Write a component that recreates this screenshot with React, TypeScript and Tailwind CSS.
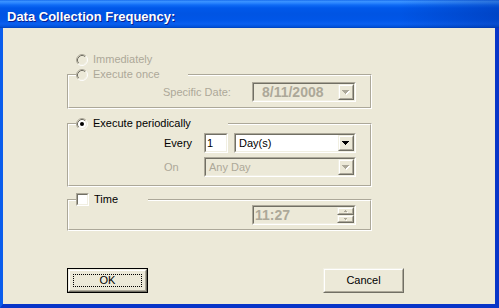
import React from 'react';

type P = { className?: string; inner?: string; children?: React.ReactNode };

const Sunken = ({ className = '', inner = '', children }: P) => (
  <div className={`border border-t-[#ACA899] border-l-[#ACA899] border-r-white border-b-white ${className}`}>
    <div className={`w-full h-full border border-t-[#716F64] border-l-[#716F64] border-r-[#F1EFE2] border-b-[#F1EFE2] flex items-stretch ${inner}`}>
      {children}
    </div>
  </div>
);

const Raised = ({ className = '', inner = '', children }: P) => (
  <div className={`border border-t-[#F1EFE2] border-l-[#F1EFE2] border-r-[#716F64] border-b-[#716F64] bg-[#ECE9D8] ${className}`}>
    <div className={`w-full h-full border border-t-white border-l-white border-r-[#ACA899] border-b-[#ACA899] flex items-center justify-center ${inner}`}>
      {children}
    </div>
  </div>
);

const Arrow = ({ disabled = false }: { disabled?: boolean }) => (
  <svg width="8" height="5" viewBox="0 0 8 5" shapeRendering="crispEdges" className="block">
    {disabled && (
      <g fill="#fff">
        <rect x="1" y="1" width="7" height="1" />
        <rect x="2" y="2" width="5" height="1" />
        <rect x="3" y="3" width="3" height="1" />
        <rect x="4" y="4" width="1" height="1" />
      </g>
    )}
    <g fill={disabled ? '#ACA899' : '#000'}>
      <rect x="0" y="0" width="7" height="1" />
      <rect x="1" y="1" width="5" height="1" />
      <rect x="2" y="2" width="3" height="1" />
      <rect x="3" y="3" width="1" height="1" />
    </g>
  </svg>
);

const TinyArrow = ({ up = false }: { up?: boolean }) => (
  <svg width="4" height="3" viewBox="0 0 4 3" shapeRendering="crispEdges" className="block">
    <g fill="#ACA899">
      {up ? (
        <>
          <rect x="1" y="0" width="1" height="1" />
          <rect x="0" y="1" width="3" height="1" />
        </>
      ) : (
        <>
          <rect x="0" y="0" width="3" height="1" />
          <rect x="1" y="1" width="1" height="1" />
        </>
      )}
    </g>
    <rect x={up ? 3 : 2} y={up ? 2 : 2} width="1" height="1" fill="#fff" />
  </svg>
);

const Radio = ({ checked = false, disabled = false }: { checked?: boolean; disabled?: boolean }) => (
  <svg width="12" height="12" viewBox="0 0 12 12" className="block shrink-0">
    <circle cx="6" cy="6" r="4" fill={disabled ? '#ECE9D8' : '#fff'} />
    <path d="M2.11 9.89A5.5 5.5 0 0 1 9.89 2.11" fill="none" stroke="#ACA899" />
    <path d="M9.89 2.11A5.5 5.5 0 0 1 2.11 9.89" fill="none" stroke="#fff" />
    <path d="M2.82 9.18A4.5 4.5 0 0 1 9.18 2.82" fill="none" stroke="#716F64" />
    <path d="M9.18 2.82A4.5 4.5 0 0 1 2.82 9.18" fill="none" stroke="#F1EFE2" />
    {checked && <circle cx="6" cy="6" r="2" fill="#000" />}
  </svg>
);

const Group = ({
  label,
  labelW,
  className = '',
  children,
}: {
  label: React.ReactNode;
  labelW: string;
  className?: string;
  children?: React.ReactNode;
}) => (
  <div className={`relative w-[305px] border border-t-[#ACA899] border-l-[#ACA899] border-r-white border-b-white ${className}`}>
    <div className="border border-t-white border-l-white border-r-[#ACA899] border-b-[#ACA899]">{children}</div>
    <div className={`absolute left-[8px] top-[-7px] h-[13px] bg-[#ECE9D8] flex items-center gap-[5px] ${labelW}`}>{label}</div>
  </div>
);

export default function App() {
  return (
    <div className="w-[499px] h-[308px] flex flex-col overflow-hidden font-['Liberation_Sans',Arial,sans-serif] text-[11px] leading-[13px] text-black bg-[#ECE9D8]">
      {/* Title bar */}
      <div className="h-[28px] shrink-0 flex items-center pl-[7px] pt-[5px] bg-[linear-gradient(to_right,rgba(0,0,0,0)_80%,rgba(0,20,110,0.25)_100%),linear-gradient(to_bottom,#0A5EE8_0px,#3D95FF_1px,#2B86FE_3px,#0F6BF5_5px,#0058EA_8px,#0054E3_14px,#0056E8_20px,#0A5FEF_24px,#0050D8_27px,#003DB5_28px)]">
        <span className="text-white font-bold text-[13px] leading-[13px] [text-shadow:1px_1px_0_#0A1E8C]">
          Data Collection Frequency:
        </span>
      </div>

      {/* Client */}
      <div className="flex-1 flex flex-col border-l-[3px] border-l-[#0A5DEC] border-r-[4px] border-r-[#0735C8] border-b-[4px] border-b-[#0735C8] pl-[64px] pt-[25px]">
        {/* Immediately */}
        <div className="h-[13px] flex items-center gap-[5px] ml-[9px]">
          <Radio disabled />
          <span className="text-[#ACA899]">Immediately</span>
        </div>

        {/* Execute once */}
        <Group
          className="mt-[8px]"
          labelW="w-[112px]"
          label={
            <>
              <Radio disabled />
              <span className="text-[#ACA899]">Execute once</span>
            </>
          }
        >
          <div className="pt-[6px] pb-[5px] flex items-center">
            <span className="ml-[94px] w-[89px] text-[#ACA899]">Specific Date:</span>
            <Sunken className="w-[104px] h-[20px]" inner="bg-[#ECE9D8]">
              <div className="flex-1 flex items-center pl-[8px] font-bold text-[14px] text-[#ACA899]">8/11/2008</div>
              <Raised className="w-[16px] h-full">
                <Arrow disabled />
              </Raised>
            </Sunken>
          </div>
        </Group>

        {/* Execute periodically */}
        <Group
          className="mt-[14px]"
          labelW="w-[152px]"
          label={
            <>
              <Radio checked />
              <span>Execute periodically</span>
            </>
          }
        >
          <div className="pt-[8px] pb-[8px] flex flex-col gap-[4px]">
            <div className="flex items-center">
              <span className="ml-[95px] w-[40px]">Every</span>
              <Sunken className="w-[24px] h-[20px]" inner="bg-white">
                <div className="flex items-center pl-[1px]">1</div>
              </Sunken>
              <Sunken className="ml-[6px] w-[122px] h-[20px]" inner="bg-white">
                <div className="flex-1 flex items-center pl-[3px]">Day(s)</div>
                <Raised className="w-[16px] h-full">
                  <Arrow />
                </Raised>
              </Sunken>
            </div>
            <div className="flex items-center">
              <span className="ml-[95px] w-[40px] text-[#ACA899]">On</span>
              <Sunken className="w-[152px] h-[20px]" inner="bg-[#ECE9D8]">
                <div className="flex-1 flex items-center pl-[3px] text-[#ACA899]">Any Day</div>
                <Raised className="w-[16px] h-full">
                  <Arrow disabled />
                </Raised>
              </Sunken>
            </div>
          </div>
        </Group>

        {/* Time */}
        <Group
          className="mt-[12px]"
          labelW="w-[72px]"
          label={
            <>
              <Sunken className="w-[13px] h-[13px]" inner="bg-white" />
              <span>Time</span>
            </>
          }
        >
          <div className="pt-[4px] pb-[4px] flex items-center">
            <Sunken className="ml-[183px] w-[104px] h-[20px]" inner="bg-[#ECE9D8]">
              <div className="flex-1 flex items-center pl-[1px] font-bold text-[14px] text-[#ACA899]">11:27</div>
              <div className="w-[17px] flex flex-col">
                <Raised className="h-[8px]">
                  <TinyArrow up />
                </Raised>
                <Raised className="h-[8px]">
                  <TinyArrow />
                </Raised>
              </div>
            </Sunken>
          </div>
        </Group>

        {/* Buttons */}
        <div className="mt-[37px] flex items-center">
          <div className="w-[81px] h-[25px] border border-black">
            <Raised className="w-full h-full" inner="p-[3px]">
              <div className="w-full h-full border border-dotted border-black flex items-center justify-center">OK</div>
            </Raised>
          </div>
          <Raised className="ml-[175px] w-[81px] h-[25px]">Cancel</Raised>
        </div>
      </div>
    </div>
  );
}
